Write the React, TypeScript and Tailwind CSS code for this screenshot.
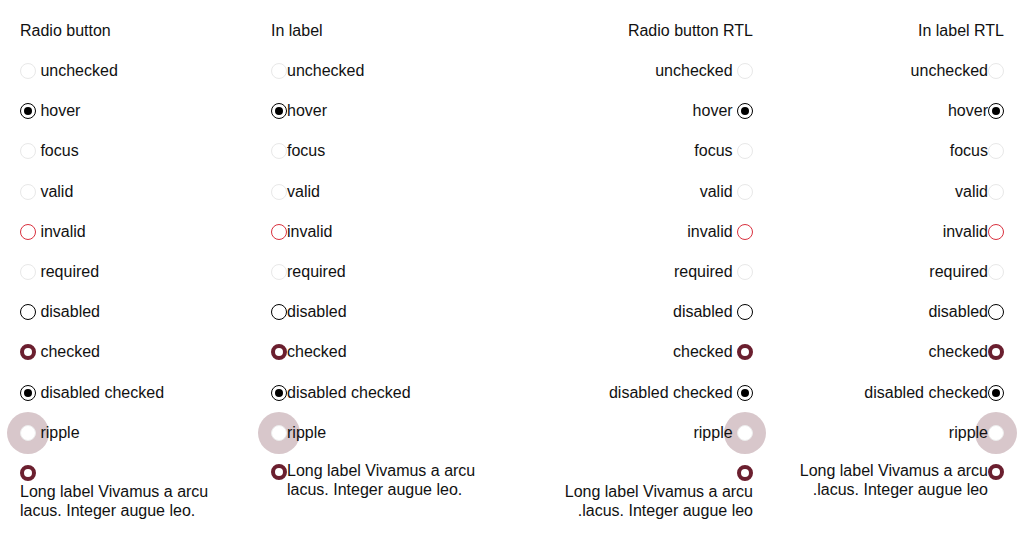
import React from "react";

type Kind =
  | "unchecked"
  | "hover"
  | "focus"
  | "valid"
  | "invalid"
  | "required"
  | "disabled"
  | "checked"
  | "disabledChecked"
  | "ripple";

const rows: { kind: Kind; label: string }[] = [
  { kind: "unchecked", label: "unchecked" },
  { kind: "hover", label: "hover" },
  { kind: "focus", label: "focus" },
  { kind: "valid", label: "valid" },
  { kind: "invalid", label: "invalid" },
  { kind: "required", label: "required" },
  { kind: "disabled", label: "disabled" },
  { kind: "checked", label: "checked" },
  { kind: "disabledChecked", label: "disabled checked" },
  { kind: "ripple", label: "ripple" },
];

function Radio({ kind }: { kind: Kind }) {
  if (kind === "hover" || kind === "disabledChecked") {
    return (
      <span className="relative flex h-4 w-4 shrink-0 items-center justify-center rounded-full border border-black bg-white">
        <span className="h-2 w-2 rounded-full bg-black" />
      </span>
    );
  }
  if (kind === "checked") {
    return <span className="relative block h-4 w-4 shrink-0 rounded-full border-4 border-[#6b1f2f] bg-white" />;
  }
  if (kind === "disabled") {
    return <span className="relative block h-4 w-4 shrink-0 rounded-full border border-black bg-white" />;
  }
  if (kind === "invalid") {
    return <span className="relative block h-4 w-4 shrink-0 rounded-full border border-[#d9303e] bg-white" />;
  }
  if (kind === "ripple") {
    return (
      <span className="relative block h-4 w-4 shrink-0 rounded-full border border-[#ececec] bg-white">
        <span className="absolute -z-10 left-[-14px] top-[-14px] h-[42px] w-[42px] rounded-full bg-[#d8c7cb]" />
      </span>
    );
  }
  return <span className="relative block h-4 w-4 shrink-0 rounded-full border border-[#e8e8e8] bg-white" />;
}

const LONG = "Long label Vivamus a arcu lacus. Integer augue leo.";

function Column({ title, inLabel, rtl }: { title: string; inLabel: boolean; rtl: boolean }) {
  return (
    <div dir={rtl ? "rtl" : "ltr"} className="flex flex-col">
      <div className="flex h-[40.22px] items-center">{title}</div>
      {rows.map((r) => (
        <div key={r.kind} className="flex h-[40.22px] items-center">
          <Radio kind={r.kind} />
          <span className={inLabel ? "" : "ms-[4.4px]"}>{r.label}</span>
        </div>
      ))}
      {inLabel ? (
        <div className="flex items-start pt-[9.4px]">
          <span className="mt-[1.2px]">
            <Radio kind="checked" />
          </span>
          <span className="leading-[18.8px]">{LONG}</span>
        </div>
      ) : (
        <div className="flex flex-col items-start pt-[11.6px]">
          <Radio kind="checked" />
          <span className="mt-[2.6px] leading-[18.4px]">{LONG}</span>
        </div>
      )}
    </div>
  );
}

export default function App() {
  return (
    <div
      className="isolate grid h-[540px] w-[1024px] grid-cols-4 gap-x-5 bg-white px-5 pt-[10.6px] text-[16px] text-[#111]"
      style={{ fontFamily: '"Liberation Sans", Arial, sans-serif' }}
    >
      <Column title="Radio button" inLabel={false} rtl={false} />
      <Column title="In label" inLabel={true} rtl={false} />
      <Column title="Radio button RTL" inLabel={false} rtl={true} />
      <Column title="In label RTL" inLabel={true} rtl={true} />
    </div>
  );
}
